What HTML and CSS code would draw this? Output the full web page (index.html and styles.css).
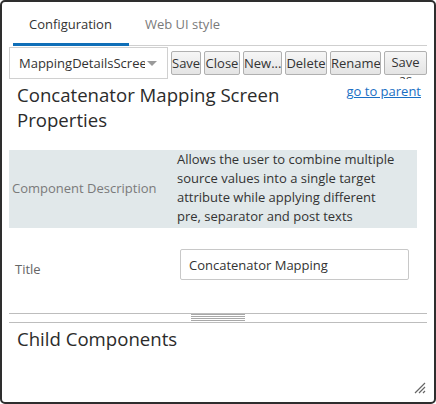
FILE: index.html
```html
<!DOCTYPE html>
<html>
<head>
<meta charset="utf-8">
<link rel="stylesheet" href="styles.css">
</head>
<body>
<div class="window">
  <div class="tabs">
    <div class="tab active">Configuration</div>
    <div class="tab">Web UI style</div>
  </div>
  <div class="toolbar">
    <div class="select">
      <span class="select-text">MappingDetailsScreen</span>
      <span class="caret"></span>
    </div>
    <button class="btn b-save">Save</button>
    <button class="btn b-close">Close</button>
    <button class="btn b-new">New...</button>
    <button class="btn b-delete">Delete</button>
    <button class="btn b-rename">Rename</button>
    <button class="btn b-saveas">Save as</button>
  </div>
  <div class="content">
    <div class="heading-row">
      <h1 class="heading">Concatenator Mapping Screen Properties</h1>
      <a class="parent-link" href="#">go to parent</a>
    </div>
    <div class="prop prop-desc">
      <div class="prop-label">Component Description</div>
      <div class="prop-value">Allows the user to combine multiple source values into a single target attribute while applying different pre, separator and post texts</div>
    </div>
    <div class="prop prop-title">
      <div class="prop-label">Title</div>
      <div class="prop-value"><input class="text-input" type="text" value="Concatenator Mapping"></div>
    </div>
  </div>
  <div class="splitter"><div class="grip"></div></div>
  <div class="child">
    <h2 class="child-heading">Child Components</h2>
  </div>
  <svg class="resize" width="12" height="12" viewBox="0 0 12 12">
    <path d="M1 11 L11 1 M5 11 L11 5 M9 11 L11 9" stroke="#666" stroke-width="1.2" fill="none"/>
  </svg>
</div>
</body>
</html>
```

FILE: styles.css
```css
* { box-sizing: border-box; }

html, body {
  margin: 0;
  padding: 0;
  background: #ffffff;
}

body {
  font-family: "Open Sans", "Noto Sans", sans-serif;
  font-size: 13px;
  color: #333333;
}

.window {
  position: relative;
  width: 436px;
  height: 404px;
  border: 2px solid #2e2e2e;
  border-radius: 5px;
  overflow: hidden;
  background: #ffffff;
}

/* Tabs */
.tabs {
  display: flex;
  margin: 0 7px 0 11px;
  border-bottom: 1px solid #cfcfcf;
}

.tab {
  padding: 12px 17px 9px 16px;
  line-height: 20px;
  font-size: 13px;
  color: #7a7a7a;
  border-bottom: 3px solid transparent;
  margin-bottom: -1px;
}

.tab.active {
  color: #333333;
  border-bottom-color: #0f6fb8;
}

/* Toolbar */
.toolbar {
  display: flex;
  align-items: flex-start;
  margin: 1px 7px 0 7px;
  height: 32px;
  overflow: hidden;
}

.select {
  display: flex;
  align-items: center;
  width: 159px;
  height: 32px;
  border: 1px solid #d0d0d0;
  padding-left: 9px;
  flex: none;
}

.select-text {
  width: 126px;
  overflow: hidden;
  white-space: nowrap;
  font-size: 13px;
  color: #333;
}

.caret {
  width: 0;
  height: 0;
  margin-left: 2px;
  border-left: 5px solid transparent;
  border-right: 5px solid transparent;
  border-top: 5px solid #9a9a9a;
}

.btn {
  flex: none;
  margin: 4px 0 0 3px;
  height: 24px;
  padding: 0;
  border: 1px solid #b0b0b0;
  border-radius: 2px;
  background: linear-gradient(#f6f6f6, #e4e4e4);
  font-family: "Open Sans", "Noto Sans", sans-serif;
  font-size: 13px;
  color: #333;
  line-height: 20px;
  text-align: center;
  white-space: nowrap;
  overflow: hidden;
}

.b-save { width: 30px; }
.b-close { width: 36px; }
.b-new { width: 39px; }
.b-delete { width: 42px; }
.b-rename { width: 51px; }

.b-saveas {
  width: 43px;
  white-space: normal;
  overflow: visible;
  line-height: 17px;
  padding-top: 2px;
  display: block;
  text-align: center;
}

/* Content */
.content {
  margin: 0 7px 0 7px;
}

.heading-row {
  display: flex;
  align-items: flex-start;
  padding: 3px 6px 0 8px;
}

.heading {
  flex: 1;
  margin: 0;
  font-size: 18.6px;
  font-weight: normal;
  line-height: 25px;
  color: #2b2b2b;
  padding-right: 14px;
}

.parent-link {
  flex: none;
  margin-left: -3px;
  font-size: 13px;
  line-height: 19px;
  color: #1a6fc4;
  text-decoration: underline;
}

.prop {
  display: grid;
  align-items: center;
  width: 408px;
}

.prop-desc {
  margin-top: 18px;
  background: #e1e8ea;
  grid-template-columns: 165px 1fr;
  padding: 0 18px 2px 3px;
}

.prop-desc .prop-value {
  line-height: 19px;
  color: #333;
  font-size: 13px;
}

.prop-label {
  color: #7a7a7a;
  font-size: 13px;
}

.prop-title {
  margin-top: 21px;
  grid-template-columns: 165px 1fr;
  padding-left: 6px;
}

.prop-title .prop-label {
  padding-top: 9px;
  color: #666;
}

.text-input {
  display: block;
  width: 229px;
  height: 31px;
  border: 1px solid #c8c8c8;
  border-radius: 2px;
  padding: 0 8px;
  font-family: "Open Sans", "Noto Sans", sans-serif;
  font-size: 13px;
  color: #333;
}

/* Splitter */
.splitter {
  margin: 33px 7px 0 7px;
  height: 10px;
  border-top: 1px solid #bdbdbd;
  border-bottom: 1px solid #bdbdbd;
  display: flex;
  justify-content: center;
}

.grip {
  width: 54px;
  height: 8px;
  background: repeating-linear-gradient(to bottom, #a8a8a8 0, #a8a8a8 1px, transparent 1px, transparent 2px);
}

.child {
  margin: 3px 7px 0 7px;
  padding-left: 8px;
}

.child-heading {
  margin: 0;
  font-size: 18.6px;
  font-weight: normal;
  line-height: 26px;
  color: #2b2b2b;
}

.resize {
  position: absolute;
  right: 8px;
  bottom: 8px;
}
```
